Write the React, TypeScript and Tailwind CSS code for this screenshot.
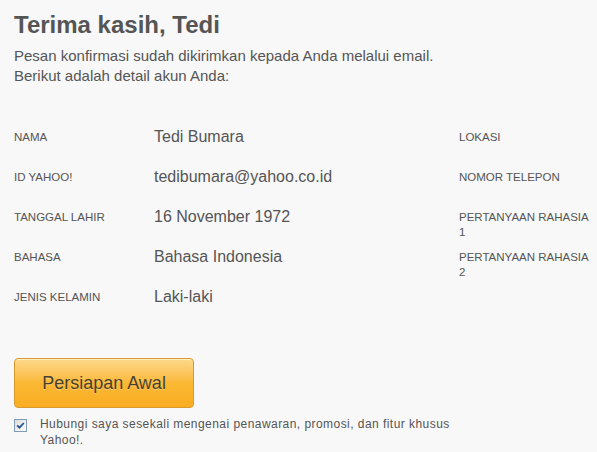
import React from "react";

interface DetailRow {
	label: string;
	value: string;
	side: string;
}

const ROWS: DetailRow[] = [
	{ label: "Nama", value: "Tedi Bumara", side: "Lokasi" },
	{ label: "ID Yahoo!", value: "tedibumara@yahoo.co.id", side: "Nomor Telepon" },
	{ label: "Tanggal Lahir", value: "16 November 1972", side: "Pertanyaan Rahasia 1" },
	{ label: "Bahasa", value: "Bahasa Indonesia", side: "Pertanyaan Rahasia 2" },
	{ label: "Jenis Kelamin", value: "Laki-laki", side: "" },
];

const CheckMark: React.FC = () => (
	<span className="mt-[2.5px] flex h-[13px] w-[13px] shrink-0 items-center justify-center border border-[#7f9db9] bg-gradient-to-br from-[#dcdcd7] to-[#ffffff]">
		<svg width="9" height="9" viewBox="0 0 9 9">
			<path d="M1.2 4.3 L3.5 6.6 L7.8 2" fill="none" stroke="#2a4f9a" strokeWidth="1.8" />
		</svg>
	</span>
);

const App: React.FC = () => {
	return (
		<div className="min-h-screen w-full bg-[#f8f8f8] px-[14px] pt-[11px] text-[#555] font-['Liberation_Sans',Arial,sans-serif]">
			{/* HEADER *************************************************** */}
			<h1 className="text-[24px] font-bold leading-[28px] text-[#555]">Terima kasih, Tedi</h1>
			<p className="mt-[7px] text-[15px] leading-[20px]">
				Pesan konfirmasi sudah dikirimkan kepada Anda melalui email.
				<br />
				Berikut adalah detail akun Anda:
			</p>

			{/* DETAIL AKUN *************************************************** */}
			<div className="mt-[41px] grid grid-cols-[140px_305px_136px]">
				{ROWS.map((row) => (
					<React.Fragment key={row.label}>
						<div className="h-10 pt-[4px] text-[11.5px] uppercase leading-[13px]">{row.label}</div>
						<div className="h-10 text-[16px] leading-[20px]">{row.value}</div>
						<div className="h-10 pt-[3px] text-[11.5px] uppercase leading-[15px]">{row.side}</div>
					</React.Fragment>
				))}
			</div>

			{/* TOMBOL *************************************************** */}
			<button
				type="button"
				className="mt-[31px] flex h-[50px] w-[180px] items-center justify-center rounded-[4px] border border-[#d99a2b] bg-gradient-to-b from-[#fdd98a] via-[#fbb832] to-[#f9ad22] text-[18px] text-[#4a3f2c] shadow-[inset_0_1px_0_rgba(255,255,255,0.5)] [text-shadow:0_1px_0_rgba(255,255,255,0.35)]"
			>
				Persiapan Awal
			</button>

			{/* LANGGANAN *************************************************** */}
			<label className="mt-[8px] flex items-start gap-[13px]">
				<CheckMark />
				<span className="w-[420px] text-[12px] leading-[16px] tracking-[0.45px]">
					Hubungi saya sesekali mengenai penawaran, promosi, dan fitur khusus Yahoo!.
				</span>
			</label>
		</div>
	);
};

export default App;
